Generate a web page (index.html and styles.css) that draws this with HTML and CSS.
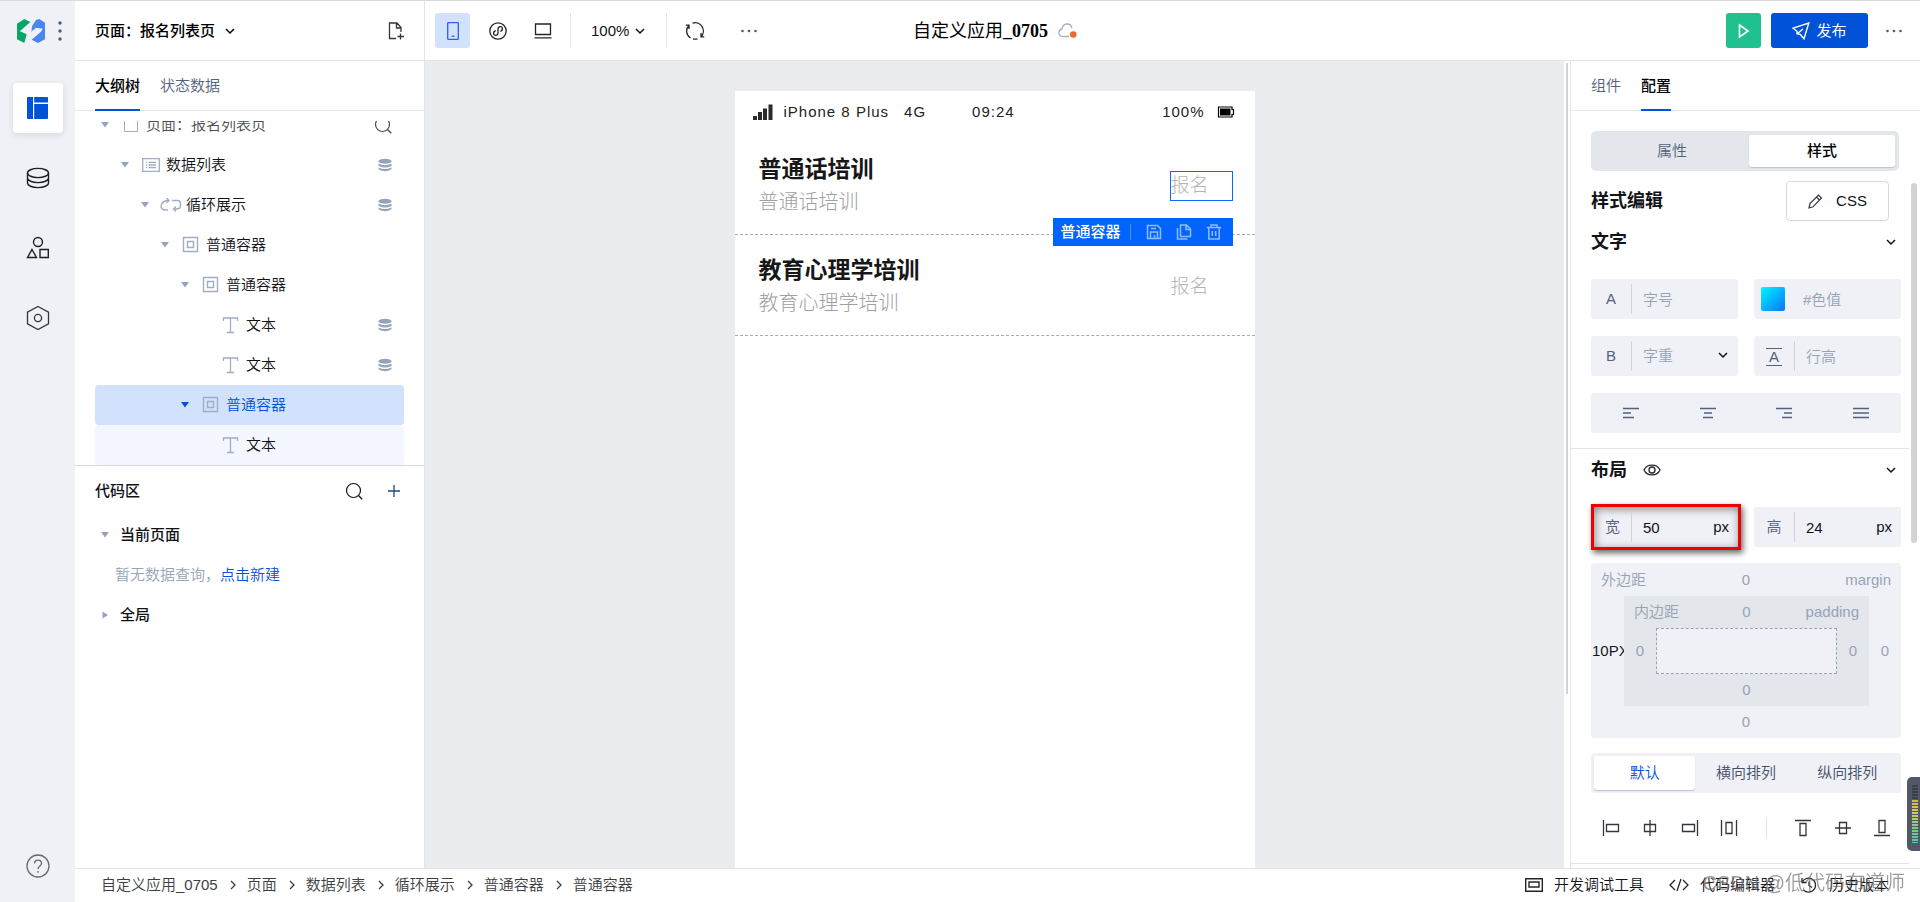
FILE: index.html
```html
<!DOCTYPE html>
<html lang="zh-CN">
<head>
<meta charset="utf-8">
<title>自定义应用_0705</title>
<link rel="stylesheet" href="styles.css">
</head>
<body>
<svg class="sprite" aria-hidden="true">
  <symbol id="chev" viewBox="0 0 12 12"><path d="M2 4l4 4 4-4" fill="none" stroke="currentColor" stroke-width="1.5"/></symbol>
  <symbol id="chevr" viewBox="0 0 12 12"><path d="M4 2l4 4-4 4" fill="none" stroke="currentColor" stroke-width="1.3"/></symbol>
  <symbol id="down" viewBox="0 0 10 10"><path d="M1 2h8L5 7.500z" fill="currentColor"/></symbol>
  <symbol id="right" viewBox="0 0 10 10"><path d="M2.500 1.500v7L8 5z" fill="currentColor"/></symbol>
  <symbol id="box" viewBox="0 0 20 20"><path d="M2.500 2.500h14v14h-14zM6.500 6.500h6v6h-6z" fill="none" stroke="currentColor" stroke-width="1.4"/></symbol>
  <symbol id="text" viewBox="0 0 20 20"><path d="M2.500 6V3h14v3M9.500 3v14.500M6 17.500h7" fill="none" stroke="currentColor" stroke-width="1.3"/></symbol>
  <symbol id="data" viewBox="0 0 14 14"><ellipse cx="7" cy="3.300" rx="6.500" ry="2.500" fill="currentColor"/><path d="M.5 5.600Q7 8.800 13.500 5.600V7.700Q7 11.400 .5 7.700zM.5 9.400Q7 12.600 13.500 9.400V11.200Q7 15.400 .5 11.200z" fill="currentColor"/></symbol>
  <symbol id="search" viewBox="0 0 18 18"><circle cx="8.500" cy="8.500" r="7" fill="none" stroke="currentColor" stroke-width="1.2"/><path d="M13.500 13.500l3.700 3.700" stroke="currentColor" stroke-width="1.3"/></symbol>
  <symbol id="dots" viewBox="0 0 18 6"><g fill="currentColor"><circle cx="2.500" cy="3" r="1.300"/><circle cx="9" cy="3" r="1.300"/><circle cx="15.500" cy="3" r="1.300"/></g></symbol>
</svg>
<div class="app">
  <nav class="rail">
    <div class="brand">
      <svg width="28" height="24" viewBox="0 0 84 72"><path d="M0 14L22 0l18 9-23 20-8 8 20 9-7 26-22-11z" fill="#07a568"/><path d="M45 22L57 3l10-3 17 11v50L63 72 44 62l28-24 5-9-20-3-14 13z" fill="#4a86f0"/><path d="M8 36L46 20l-8 17 38-8-34 24 3-16z" fill="#eff1f6"/></svg>
      <svg class="slate" width="4" height="22" viewBox="0 0 4 22"><g fill="currentColor"><circle cx="2" cy="3" r="1.700"/><circle cx="2" cy="11" r="1.700"/><circle cx="2" cy="19" r="1.700"/></g></svg>
    </div>
    <button class="tile active" aria-label="页面"><svg width="22" height="22" viewBox="0 0 22 22"><path d="M1 0h5v22H1a1 1 0 0 1-1-1V1a1 1 0 0 1 1-1zM7.200 0H20a1 1 0 0 1 1 1v4.500H7.200zM7.200 7H21v14a1 1 0 0 1-1 1H7.200z" fill="#0052d9"/></svg></button>
    <button class="tile" aria-label="数据"><svg width="24" height="24" viewBox="0 0 24 24" fill="none" stroke="#1c1f26" stroke-width="1.400"><ellipse cx="12" cy="7" rx="10.500" ry="4.600"/><path d="M1.500 7v10c0 2.500 4.700 4.600 10.500 4.600s10.500-2.100 10.500-4.600V7M1.500 12c0 2.500 4.700 4.600 10.500 4.600s10.500-2.100 10.500-4.600"/></svg></button>
    <button class="tile" aria-label="素材"><svg width="24" height="24" viewBox="0 0 24 24" fill="none" stroke="#1c1f26" stroke-width="1.400"><circle cx="12" cy="6" r="4.500"/><path d="M6 13.500L10.500 21.500h-9zM14 13.500h8.300v8H14z"/></svg></button>
    <button class="tile" aria-label="设置"><svg width="24" height="26" viewBox="0 0 24 26" fill="none" stroke="#33363d" stroke-width="1.300"><path d="M12 1.500L22.500 7.200v11.600L12 24.500 1.500 18.800V7.200z"/><circle cx="12" cy="13" r="3.600"/></svg></button>
    <button class="tile help" aria-label="帮助"><svg width="24" height="24" viewBox="0 0 24 24" fill="none" stroke="#666a72" stroke-width="1.300"><circle cx="12" cy="12" r="11"/><path d="M8.500 9.500c0-4.500 7-4.500 7 0 0 2.500-3.500 2.500-3.500 5.500M12 17v1.800"/></svg></button>
  </nav>
  <div class="workspace">
    <header class="topbar">
      <div class="top-left">
        <div class="page-head">
          <button class="page-pick">页面：报名列表页 <svg width="12" height="12"><use href="#chev"/></svg></button>
          <button aria-label="新建页面"><svg width="17" height="18" viewBox="0 0 17 18" fill="none" stroke="#33363d" stroke-width="1.300"><path d="M8 16.500H1.500V1H9l4 4.500V10M8.500 1v5H13M12.500 11.500v6M9.500 14.500h6.500"/></svg></button>
        </div>
        <div class="devices">
          <button class="square on" aria-label="手机"><svg width="12" height="18" viewBox="0 0 12 18" fill="none" stroke="#2864e0" stroke-width="1.300"><rect x=".7" y=".7" width="10.600" height="16.600" rx=".6"/><path d="M4.500 14.200h3"/></svg></button>
          <button class="square" aria-label="小程序"><svg width="18" height="18" viewBox="0 0 18 18" fill="none" stroke="#22252b" stroke-width="1.300"><circle cx="9" cy="9" r="8.200"/><path d="M6.800 8.600c-3 .6-2.800 4.700-.3 4.700 1.500 0 2.500-.9 2.500-2.300V7c0-1.400 1-2.300 2.300-2.300 2.700 0 2.900 4.100 0 4.700"/></svg></button>
          <button class="square" aria-label="桌面"><svg width="18" height="16" viewBox="0 0 18 16" fill="none" stroke="#22252b" stroke-width="1.300"><path d="M1.500 1h15v10.500h-15zM.5 14.800h17"/></svg></button>
          <label class="zoom"><select aria-label="缩放"><option>100%</option></select><svg width="12" height="12"><use href="#chev"/></svg></label>
          <button class="square" aria-label="刷新"><svg width="20" height="18" viewBox="0 0 20 18" fill="none" stroke="#22252b" stroke-width="1.300"><path d="M5.500 16A8.200 8.200 0 0 1 4 3.300M4 7V3.200H.8M7.500 1.200A8.200 8.200 0 0 1 16 14.700M16 11v3.800h3.200M12.500 16.800a8.200 8.200 0 0 1-4.500 0"/></svg></button>
          <button class="square slate more" aria-label="更多"><svg width="18" height="6"><use href="#dots"/></svg></button>
        </div>
      </div>
      <h1 class="app-name"><span>自定义应用<b>_0705</b></span><svg width="19" height="16" viewBox="0 0 19 16"><path d="M11 13.500H4.500a3.800 3.800 0 0 1-.6-7.500C4.500 3 6.500 1 9.200 1c2.600 0 4.300 1.700 4.600 4.300" fill="none" stroke="#a3afc4" stroke-width="1.300"/><circle cx="15.300" cy="11.500" r="3.300" fill="#ed6a2f"/></svg></h1>
      <div class="actions">
        <button class="square run" aria-label="预览"><svg width="12" height="16" viewBox="0 0 12 16"><path d="M1.500 2l8.500 6-8.500 6z" fill="none" stroke="#fff" stroke-width="1.600"/></svg></button>
        <button class="publish"><svg width="18" height="18" viewBox="0 0 18 18" fill="none" stroke="#fff" stroke-width="1.400"><path d="M1 6.200L16.800 1 12 16.800 8.300 12.500 5 11.800V9.300zM5.200 11.700L11 7"/></svg>发布</button>
        <button class="slate" aria-label="更多"><svg width="18" height="6"><use href="#dots"/></svg></button>
      </div>
    </header>
    <div class="panes">
      <aside class="left">
        <div class="tabs"><button class="tab cur">大纲树</button><button class="tab">状态数据</button></div>
        <div class="tree-view">
          <ul class="tree">
            <li class="d0"><svg class="arrow"><use href="#down"/></svg><span class="kind"><svg width="16" height="16" viewBox="0 0 16 16"><path d="M1.500 1.500h13v13h-13z" fill="none" stroke="currentColor"/></svg></span>页面：报名列表页<button class="find" aria-label="搜索"><svg width="18" height="18"><use href="#search"/></svg></button></li>
            <li class="d1"><svg class="arrow"><use href="#down"/></svg><span class="kind"><svg width="18" height="14" viewBox="0 0 18 14"><path d="M.7.7h16.600v12.600H.7zM4 4.300h1.200M4 7h1.200M4 9.700h1.200M6.500 4.300H14M6.500 7H14M6.500 9.700H14" fill="none" stroke="currentColor" stroke-width="1.300"/></svg></span>数据列表<svg class="bound"><use href="#data"/></svg></li>
            <li class="d2"><svg class="arrow"><use href="#down"/></svg><span class="kind"><svg width="22" height="14" viewBox="0 0 22 14"><path d="M8 12H5a3.500 3.500 0 0 1-3.500-5C2 4 4 2.500 9 2.500M6.500 0L9 2.500 6.500 5M12 2.500h5.500a3 3 0 0 1 3 3v2c0 2-1.500 3.500-4 3.500h-3M16 8.500L13.500 11l2.500 2.500" fill="none" stroke="currentColor" stroke-width="1.400"/></svg></span>循环展示<svg class="bound"><use href="#data"/></svg></li>
            <li class="d3"><svg class="arrow"><use href="#down"/></svg><span class="kind"><svg width="20" height="20"><use href="#box"/></svg></span>普通容器</li>
            <li class="d4"><svg class="arrow"><use href="#down"/></svg><span class="kind"><svg width="20" height="20"><use href="#box"/></svg></span>普通容器</li>
            <li class="d5"><span class="arrow"></span><span class="kind"><svg width="20" height="20"><use href="#text"/></svg></span>文本<svg class="bound"><use href="#data"/></svg></li>
            <li class="d5"><span class="arrow"></span><span class="kind"><svg width="20" height="20"><use href="#text"/></svg></span>文本<svg class="bound"><use href="#data"/></svg></li>
            <li class="d4 picked"><svg class="arrow"><use href="#down"/></svg><span class="kind"><svg width="20" height="20"><use href="#box"/></svg></span>普通容器</li>
            <li class="d5 within"><span class="arrow"></span><span class="kind"><svg width="20" height="20"><use href="#text"/></svg></span>文本</li>
          </ul>
        </div>
        <section class="code">
          <div class="code-head"><h2>代码区</h2><button aria-label="搜索"><svg width="18" height="18"><use href="#search"/></svg></button><button aria-label="新建"><svg width="12" height="12" viewBox="0 0 12 12"><path d="M6 0v12M0 6h12" stroke="#1d4a7a" stroke-width="1.300"/></svg></button></div>
          <div class="group"><svg class="arrow"><use href="#down"/></svg>当前页面</div>
          <p class="empty">暂无数据查询，<a href="#new">点击新建</a></p>
          <div class="group"><svg class="arrow"><use href="#right"/></svg>全局</div>
        </section>
      </aside>
      <main class="stage">
        <div class="phone">
          <div class="phone-bar">
            <svg width="20" height="16" viewBox="0 0 20 16" fill="#2b2b2b"><path d="M0 12h4v4H0zM5 8h4v8H5zM10 4.500h4V16h-4zM15.500.5h4V16h-4z"/></svg>
            <span class="model">iPhone 8 Plus</span><span class="net">4G</span><span class="clock">09:24</span><span class="charge">100%</span>
            <svg width="18" height="12" viewBox="0 0 18 12"><path d="M1.500 1h13.500v2.500h1.500v5h-1.500V11H1.500z" fill="none" stroke="#000" stroke-width="1.200"/><path d="M3 2.500h10.500v7H3z"/></svg>
          </div>
          <article class="course">
            <div><h3>普通话培训</h3><p>普通话培训</p></div>
            <div class="join chosen">报名
              <div class="tip"><span>普通容器</span>
                <button aria-label="保存"><svg width="16" height="16" viewBox="0 0 16 16"><path d="M1.500 1.500h10l3 3v10h-13zM4.500 14.500V8h7v6.500M5 4.500h5M8.500 11v3" fill="none" stroke="currentColor" stroke-width="1.500"/></svg></button>
                <button aria-label="复制"><svg width="16" height="16" viewBox="0 0 16 16"><path d="M4.500 1h6l4 4v7.500h-10zM10 1v4.500h4.500M1.500 4v11h10" fill="none" stroke="currentColor" stroke-width="1.500"/></svg></button>
                <button aria-label="删除"><svg width="16" height="16" viewBox="0 0 16 16"><path d="M.8 3.500h14.400M5 3V1h6v2M2.800 4v11h10.400V4M6.300 7v5M9.700 7v5" fill="none" stroke="currentColor" stroke-width="1.500"/></svg></button>
              </div>
            </div>
          </article>
          <article class="course">
            <div><h3>教育心理学培训</h3><p>教育心理学培训</p></div>
            <div class="join">报名</div>
          </article>
        </div>
      </main>
      <div class="gutter"></div>
      <aside class="config">
        <div class="tabs"><button class="tab">组件</button><button class="tab cur">配置</button></div>
        <div class="switch"><button>属性</button><button class="cur">样式</button></div>
        <div class="scroller">
          <div class="css-row"><h2>样式编辑</h2><button class="css"><svg width="15" height="15" viewBox="0 0 15 15" fill="none" stroke="#33363d" stroke-width="1.200"><path d="M1 14l1-4.500L10.500 1l3 3L5 12.800zM8.500 3l3 3"/></svg>CSS</button></div>
          <section class="group-box">
            <div class="group-head"><h2>文字</h2><svg width="12" height="12"><use href="#chev"/></svg></div>
            <div class="fields">
              <label class="field"><span class="tag">A</span><input type="text" placeholder="字号"></label>
              <label class="field color"><span class="swatch"></span><input type="text" placeholder="#色值" aria-label="色值"></label>
              <label class="field"><span class="tag">B</span><select class="muted"><option>字重</option></select><svg class="drop" width="12" height="12"><use href="#chev"/></svg></label>
              <label class="field"><span class="tag"><b class="leading">A</b></span><input type="text" placeholder="行高"></label>
            </div>
            <div class="aligns">
              <button aria-label="左对齐"><svg width="16" height="12" viewBox="0 0 16 12"><path d="M0 1.500h16M0 6h8M0 10.500h11"/></svg></button>
              <button aria-label="居中"><svg width="16" height="12" viewBox="0 0 16 12"><path d="M0 1.500h16M4 6h8M3 10.500h10"/></svg></button>
              <button aria-label="右对齐"><svg width="16" height="12" viewBox="0 0 16 12"><path d="M0 1.500h16M8 6h8M6 10.500h10"/></svg></button>
              <button aria-label="两端对齐"><svg width="16" height="12" viewBox="0 0 16 12"><path d="M0 1.500h16M0 6h16M0 10.500h16"/></svg></button>
            </div>
          </section>
          <section class="group-box">
            <div class="group-head"><h2>布局</h2><svg class="eye" width="18" height="12" viewBox="0 0 18 12" fill="none" stroke="#22252b" stroke-width="1.300"><path d="M1 6C4-.5 14-.5 17 6 14 12.500 4 12.500 1 6z"/><circle cx="9" cy="6" r="3"/></svg><svg width="12" height="12"><use href="#chev"/></svg></div>
            <div class="fields">
              <label class="field marked"><span class="tag">宽</span><input type="text" value="50"><span class="unit">px</span></label>
              <label class="field"><span class="tag">高</span><input type="text" value="24"><span class="unit">px</span></label>
            </div>
            <div class="margin-box">
              <div class="edge head"><span>外边距</span><input value="0" aria-label="上外边距"><span>margin</span></div>
              <div class="middle">
                <input class="set" value="10PX" aria-label="左外边距">
                <div class="padding-box">
                  <div class="edge"><span>内边距</span><input value="0" aria-label="上内边距"><span>padding</span></div>
                  <div class="middle"><input value="0" aria-label="左内边距"><div class="core"></div><input value="0" aria-label="右内边距"></div>
                  <div class="edge"><input value="0" aria-label="下内边距"></div>
                </div>
                <input value="0" aria-label="右外边距">
              </div>
              <div class="edge"><input value="0" aria-label="下外边距"></div>
            </div>
            <div class="modes"><button class="cur">默认</button><button>横向排列</button><button>纵向排列</button></div>
            <div class="tools">
              <button aria-label="靠左"><svg width="18" height="18" viewBox="0 0 18 18"><path d="M1.500 1v16M4.500 5.500h12v7h-12z"/></svg></button>
              <button aria-label="水平居中"><svg width="18" height="18" viewBox="0 0 18 18"><path d="M9 1v16M3.500 5.500h11v7h-11z"/></svg></button>
              <button aria-label="靠右"><svg width="18" height="18" viewBox="0 0 18 18"><path d="M16.500 1v16M1.500 5.500h12v7h-12z"/></svg></button>
              <button aria-label="水平分布"><svg width="18" height="18" viewBox="0 0 18 18"><path d="M1.500 1v16M16.500 1v16M6 3.500h6v11H6z"/></svg></button>
              <i class="rule"></i>
              <button aria-label="靠上"><svg width="18" height="18" viewBox="0 0 18 18"><path d="M1 1.500h16M6 4.500h6v12H6z"/></svg></button>
              <button aria-label="垂直居中"><svg width="18" height="18" viewBox="0 0 18 18"><path d="M1 9h16M5.500 3.500h7v11h-7z"/></svg></button>
              <button aria-label="靠下"><svg width="18" height="18" viewBox="0 0 18 18"><path d="M1 16.500h16M6 1.500h6v12H6z"/></svg></button>
            </div>
          </section>
          <i class="thumb"></i>
        </div>
      </aside>
    </div>
    <footer class="status">
      <nav class="crumbs">
        <a href="#a">自定义应用_0705</a><svg><use href="#chevr"/></svg><a href="#b">页面</a><svg><use href="#chevr"/></svg><a href="#c">数据列表</a><svg><use href="#chevr"/></svg><a href="#d">循环展示</a><svg><use href="#chevr"/></svg><a href="#e">普通容器</a><svg><use href="#chevr"/></svg><a href="#f">普通容器</a>
      </nav>
      <div class="utils">
        <button><svg width="18" height="14" viewBox="0 0 18 14" fill="none" stroke="#22252b" stroke-width="1.400"><path d="M.7.7h16.600v12.600H.7zM4 4h10v5H4z"/></svg>开发调试工具</button>
        <button><svg width="20" height="14" viewBox="0 0 20 14" fill="none" stroke="#22252b" stroke-width="1.300"><path d="M6 2L1 7l5 5M14 2l5 5-5 5M12 1L8 13"/></svg>代码编辑器</button>
        <button><svg width="18" height="16" viewBox="0 0 18 16" fill="none" stroke="#22252b" stroke-width="1.300"><path d="M2 5.500A7 7 0 1 1 3.500 13M2 1v4.500h4.500M9 4.500v4l3 2"/></svg>历史版本</button>
      </div>
    </footer>
  </div>
</div>
<div class="credit">CSDN @低代码布道师</div>
<div class="meter"><i></i></div>
</body>
</html>
```
FILE: styles.css
```css
* { box-sizing: border-box; }
body {
  margin: 0;
  font: 350 15px/20px "Liberation Sans", "Noto Sans CJK SC", sans-serif;
  color: #111318;
  background: #fff;
}
h1, h2, h3, p, ul { margin: 0; padding: 0; }
button, input, select { font: inherit; color: inherit; background: none; border: 0; padding: 0; margin: 0; outline: 0; }
button { display: flex; align-items: center; justify-content: center; }
select { appearance: none; }
a { color: inherit; text-decoration: none; }
svg { flex: none; display: block; }
.sprite { position: absolute; width: 0; height: 0; }
.slate { color: #4b5b76; }

.app { display: flex; height: 100vh; border-top: 1px solid #d9dadd; }

/* icon rail */
.rail { flex: none; width: 75px; background: #eff1f6; display: flex; flex-direction: column; align-items: center; gap: 20px; padding-bottom: 11px; }
.brand { height: 62px; width: 100%; display: flex; align-items: center; gap: 13px; padding: 0 0 2px 17px; }
.tile { width: 50px; height: 50px; border-radius: 4px; }
.tile.active { background: #fff; box-shadow: 0 2px 6px rgba(30, 50, 90, .12); }
.help { margin-top: auto; }

.workspace { flex: 1; min-width: 0; display: flex; flex-direction: column; }

/* top bar */
.topbar { flex: none; height: 60px; display: flex; align-items: center; border-bottom: 1px solid #e2e5ea; }
.top-left { flex: 1 0 0; height: 100%; display: flex; }
.page-head { flex: none; width: 350px; height: 100%; display: flex; align-items: center; justify-content: space-between; padding: 0 19px 0 20px; border-right: 1px solid #e2e5ea; }
.page-pick { gap: 9px; font-weight: 500; color: #000; }
.devices { display: flex; align-items: center; gap: 10px; padding-left: 10px; }
.square { width: 35px; height: 35px; border-radius: 3px; }
.square.on { background: #d2e2fc; }
.more { margin-left: 9px; }
.zoom { display: flex; align-items: center; gap: 3px; height: 35px; padding: 0 20px; border: solid #e2e5ea; border-width: 0 1px; }
.zoom select { width: 40px; }
.app-name { display: flex; align-items: center; gap: 10px; padding-left: 12px; font: 400 18px/24px "Liberation Serif", "Noto Sans CJK SC", serif; color: #000; }
.actions { flex: 1 0 0; display: flex; align-items: center; justify-content: flex-end; gap: 10px; padding-right: 17px; }
.run { background: #20c08f; }
.publish { width: 97px; height: 35px; gap: 6px; border-radius: 3px; background: #0052d9; color: #fff; margin-right: 7px; font-weight: 400; }

.panes { flex: 1; min-height: 0; display: flex; }

.tabs { flex: none; height: 50px; display: flex; gap: 20px; padding: 0 20px; border-bottom: 1px solid #e2e5ea; }
.tab { height: 50px; padding: 4px 0 2px; color: #53627c; border-bottom: 2px solid transparent; }
.tab.cur { color: #000; font-weight: 500; border-color: #0052d9; }

/* outline and code */
.left { flex: none; width: 350px; display: flex; flex-direction: column; border-right: 1px solid #e2e5ea; }
.tree-view { flex: none; height: 344px; margin-top: 10px; overflow: hidden; }
.tree { list-style: none; margin: -16px 20px 0; }
.tree li { display: flex; align-items: center; height: 40px; padding-right: 12px; border-radius: 4px; }
.tree .d0 { color: #4a4d54; }
.tree .d1 { padding-left: 20px; }
.tree .d2 { padding-left: 40px; }
.tree .d3 { padding-left: 60px; }
.tree .d4 { padding-left: 80px; }
.tree .d5 { padding-left: 100px; }
.tree .picked { background: #d2e2fc; color: #0052d9; }
.tree .picked .arrow { color: #0052d9; }
.tree .within { background: #f4f7ff; }
.arrow { flex: none; width: 20px; height: 10px; color: #94a3ba; }
.kind { flex: none; width: 31px; display: flex; justify-content: center; color: #a0adc2; }
.bound { width: 14px; height: 14px; margin-left: auto; color: #94a3ba; }
.find { margin-left: auto; }
.code { flex: 1; border-top: 1px solid #d5d8de; padding: 0 20px; }
.code-head { height: 49px; display: flex; align-items: center; gap: 25px; padding-right: 4px; }
.code-head h2 { flex: 1; font-size: 15px; font-weight: 500; }
.group { display: flex; align-items: center; height: 40px; gap: 5px; font-weight: 500; }
.empty { height: 40px; padding: 10px 20px; color: #97a3b7; }
.empty a { color: #0052d9; }

/* canvas */
.stage { flex: 1; min-width: 0; background: #ebecf0; padding-top: 30px; display: flex; justify-content: center; }
.phone { width: 520px; background: #fff; }
.phone-bar { height: 43px; display: flex; align-items: center; padding: 0 20px 2px 18px; letter-spacing: 1px; color: #222; }
.model { margin-left: 11px; }
.net { margin-left: 15px; }
.clock { margin-left: 46px; }
.charge { margin: 0 12px 0 auto; }
.course { height: 101px; display: flex; align-items: center; justify-content: space-between; padding: 4px 22px 0 24px; border-bottom: 1px dashed #a9a9a9; }
.course h3 { font-size: 23px; line-height: 33px; color: #171717; }
.course p { font-size: 20px; line-height: 33px; font-weight: 300; color: #a0a0a0; }
.join { position: relative; width: 63px; height: 30px; font-size: 19px; line-height: 28px; font-weight: 300; color: #b4b4b4; border: 1px solid transparent; }
.join.chosen { border-color: #0a6cff; }
.tip { position: absolute; top: 46px; right: -1px; width: 180px; height: 28px; display: flex; align-items: center; gap: 14px; padding: 0 11px 0 8px; background: #0263ff; color: #8fbcff; font-size: 15px; font-weight: 500; line-height: 16px; white-space: nowrap; }
.tip span { color: #fff; padding-right: 9px; margin-right: 1px; border-right: 1px solid #4a90ff; }
.gutter { flex: none; width: 6px; background: linear-gradient(#d0d2d5, #d0d2d5) 2px 2px / 2px 631px no-repeat #fff; }

/* settings */
.config { flex: none; width: 350px; display: flex; flex-direction: column; border-left: 1px solid #e2e5ea; }
.config .tab { width: 30px; }
.switch { flex: none; display: flex; height: 40px; margin: 20px 21px 10px 20px; padding: 4px; border-radius: 5px; background: #e3e6eb; color: #53627c; }
.switch button { flex: 1; border-radius: 3px; }
.switch .cur { flex: 0 0 146px; background: #fff; color: #000; font-weight: 500; box-shadow: 0 1px 1px #b9c2d0; }
.scroller { position: relative; flex: 1; min-height: 0; overflow: hidden; padding-right: 11px; }
.config h2 { font-size: 18px; line-height: 24px; }
.css-row { display: flex; align-items: center; justify-content: space-between; padding: 0 20px; }
.css { width: 103px; height: 40px; gap: 13px; border: 1px solid #d3d8e2; border-radius: 4px; }
.group-box { padding: 0 8px 15px 20px; border-bottom: 1px solid #e2e5ea; }
.group-head { display: flex; align-items: center; justify-content: space-between; height: 42px; padding-right: 4px; margin-bottom: 16px; }
.eye { margin: 0 auto 0 16px; }
.fields { display: grid; grid-template-columns: 1fr 1fr; gap: 17px 16px; }
.field { position: relative; display: flex; align-items: center; height: 40px; border-radius: 3px; background: #eff1f6; }
.field input, .field select { flex: 1; width: 0; height: 100%; padding-left: 11px; }
.field ::placeholder, .muted { color: #97a3b7; opacity: 1; }
.tag { flex: none; width: 41px; height: 30px; line-height: 30px; text-align: center; border-right: 1px solid #cfd4de; color: #53627c; }
.leading { display: inline-block; width: 16px; height: 18px; border: solid #53627c; border-width: 1px 0; font-weight: 400; line-height: 16px; vertical-align: middle; }
.drop { position: absolute; right: 9px; top: 13px; }
.swatch { width: 24px; height: 24px; margin: 0 7px; border-radius: 2px; background: linear-gradient(135deg, #00f7ff, #0a74ff); }
.unit { padding-right: 9px; }
.marked { margin-left: 3px; outline: 3px solid #f00000; border-radius: 0; box-shadow: 2px 3px 6px 3px rgba(0, 0, 0, .6), inset 1px 2px 8px rgba(0, 0, 0, .45); }
.marked .tag { width: 38px; }
.aligns { display: flex; height: 40px; margin-top: 17px; padding: 0 2px; border-radius: 3px; background: #eff1f6; }
.aligns button { flex: 1; }
.aligns svg { stroke: #53627c; stroke-width: 1.4; }

.margin-box { margin-top: 16px; border-radius: 4px; background: #eff1f6; color: #97a3b7; }
.edge { display: flex; align-items: center; justify-content: center; height: 32px; padding: 0 10px; }
.edge.head { height: 33px; }
.edge span { flex: 1; }
.edge span:last-child { text-align: right; }
.margin-box input { width: 32px; text-align: center; }
.margin-box .set { width: 33px; color: #16181d; text-align: left; padding-left: 1px; }
.middle { display: flex; align-items: center; }
.padding-box { flex: 1; background: #e3e6eb; }
.core { flex: 1; height: 46px; border: 1px dashed #97a3b7; background: #eff1f6; }
.modes { display: grid; grid-template-columns: 1fr 1fr 1fr; height: 40px; margin-top: 15px; padding: 3px; border-radius: 4px; background: #eff1f6; color: #43506a; }
.modes button { border-radius: 3px; }
.modes .cur { background: #fff; color: #0052d9; box-shadow: 0 1px 1px #b9c2d0; }
.tools { display: flex; align-items: center; justify-content: space-between; height: 40px; margin-top: 15px; padding: 0 10px 0 11px; }
.tools svg { fill: none; stroke: #33363d; stroke-width: 1.3; }
.rule { width: 1px; height: 20px; margin: 0 6px; background: #dfe2e8; }
.thumb { position: absolute; top: 2px; right: 3px; width: 6px; height: 360px; border-radius: 3px; background: #d3d3d3; }

/* bottom bar */
.status { flex: none; height: 34px; display: flex; align-items: center; justify-content: space-between; padding: 0 31px 2px 26px; border-top: 1px solid #e2e5ea; }
.crumbs { display: flex; align-items: center; color: #3c3e43; }
.crumbs svg { width: 12px; height: 12px; margin: 0 8px 0 9px; }
.utils { display: flex; gap: 25px; }
.utils button { gap: 11px; }
.credit { position: fixed; right: 15px; bottom: 7px; font-size: 20px; line-height: 24px; color: rgba(100, 100, 100, .65); pointer-events: none; }
.meter { position: fixed; right: 0; top: 777px; width: 13px; height: 74px; padding: 8px 2px 8px 5px; border-radius: 5px 0 0 5px; background: #535867; }
.meter i { display: block; height: 58px; background: repeating-linear-gradient(transparent 0 2px, #535867 2px 3px), linear-gradient(#3a3e49 0 25%, #e0b040 26%, #c9d05a 50%, #7dc98a 75%, #4fc9b5); }
```
